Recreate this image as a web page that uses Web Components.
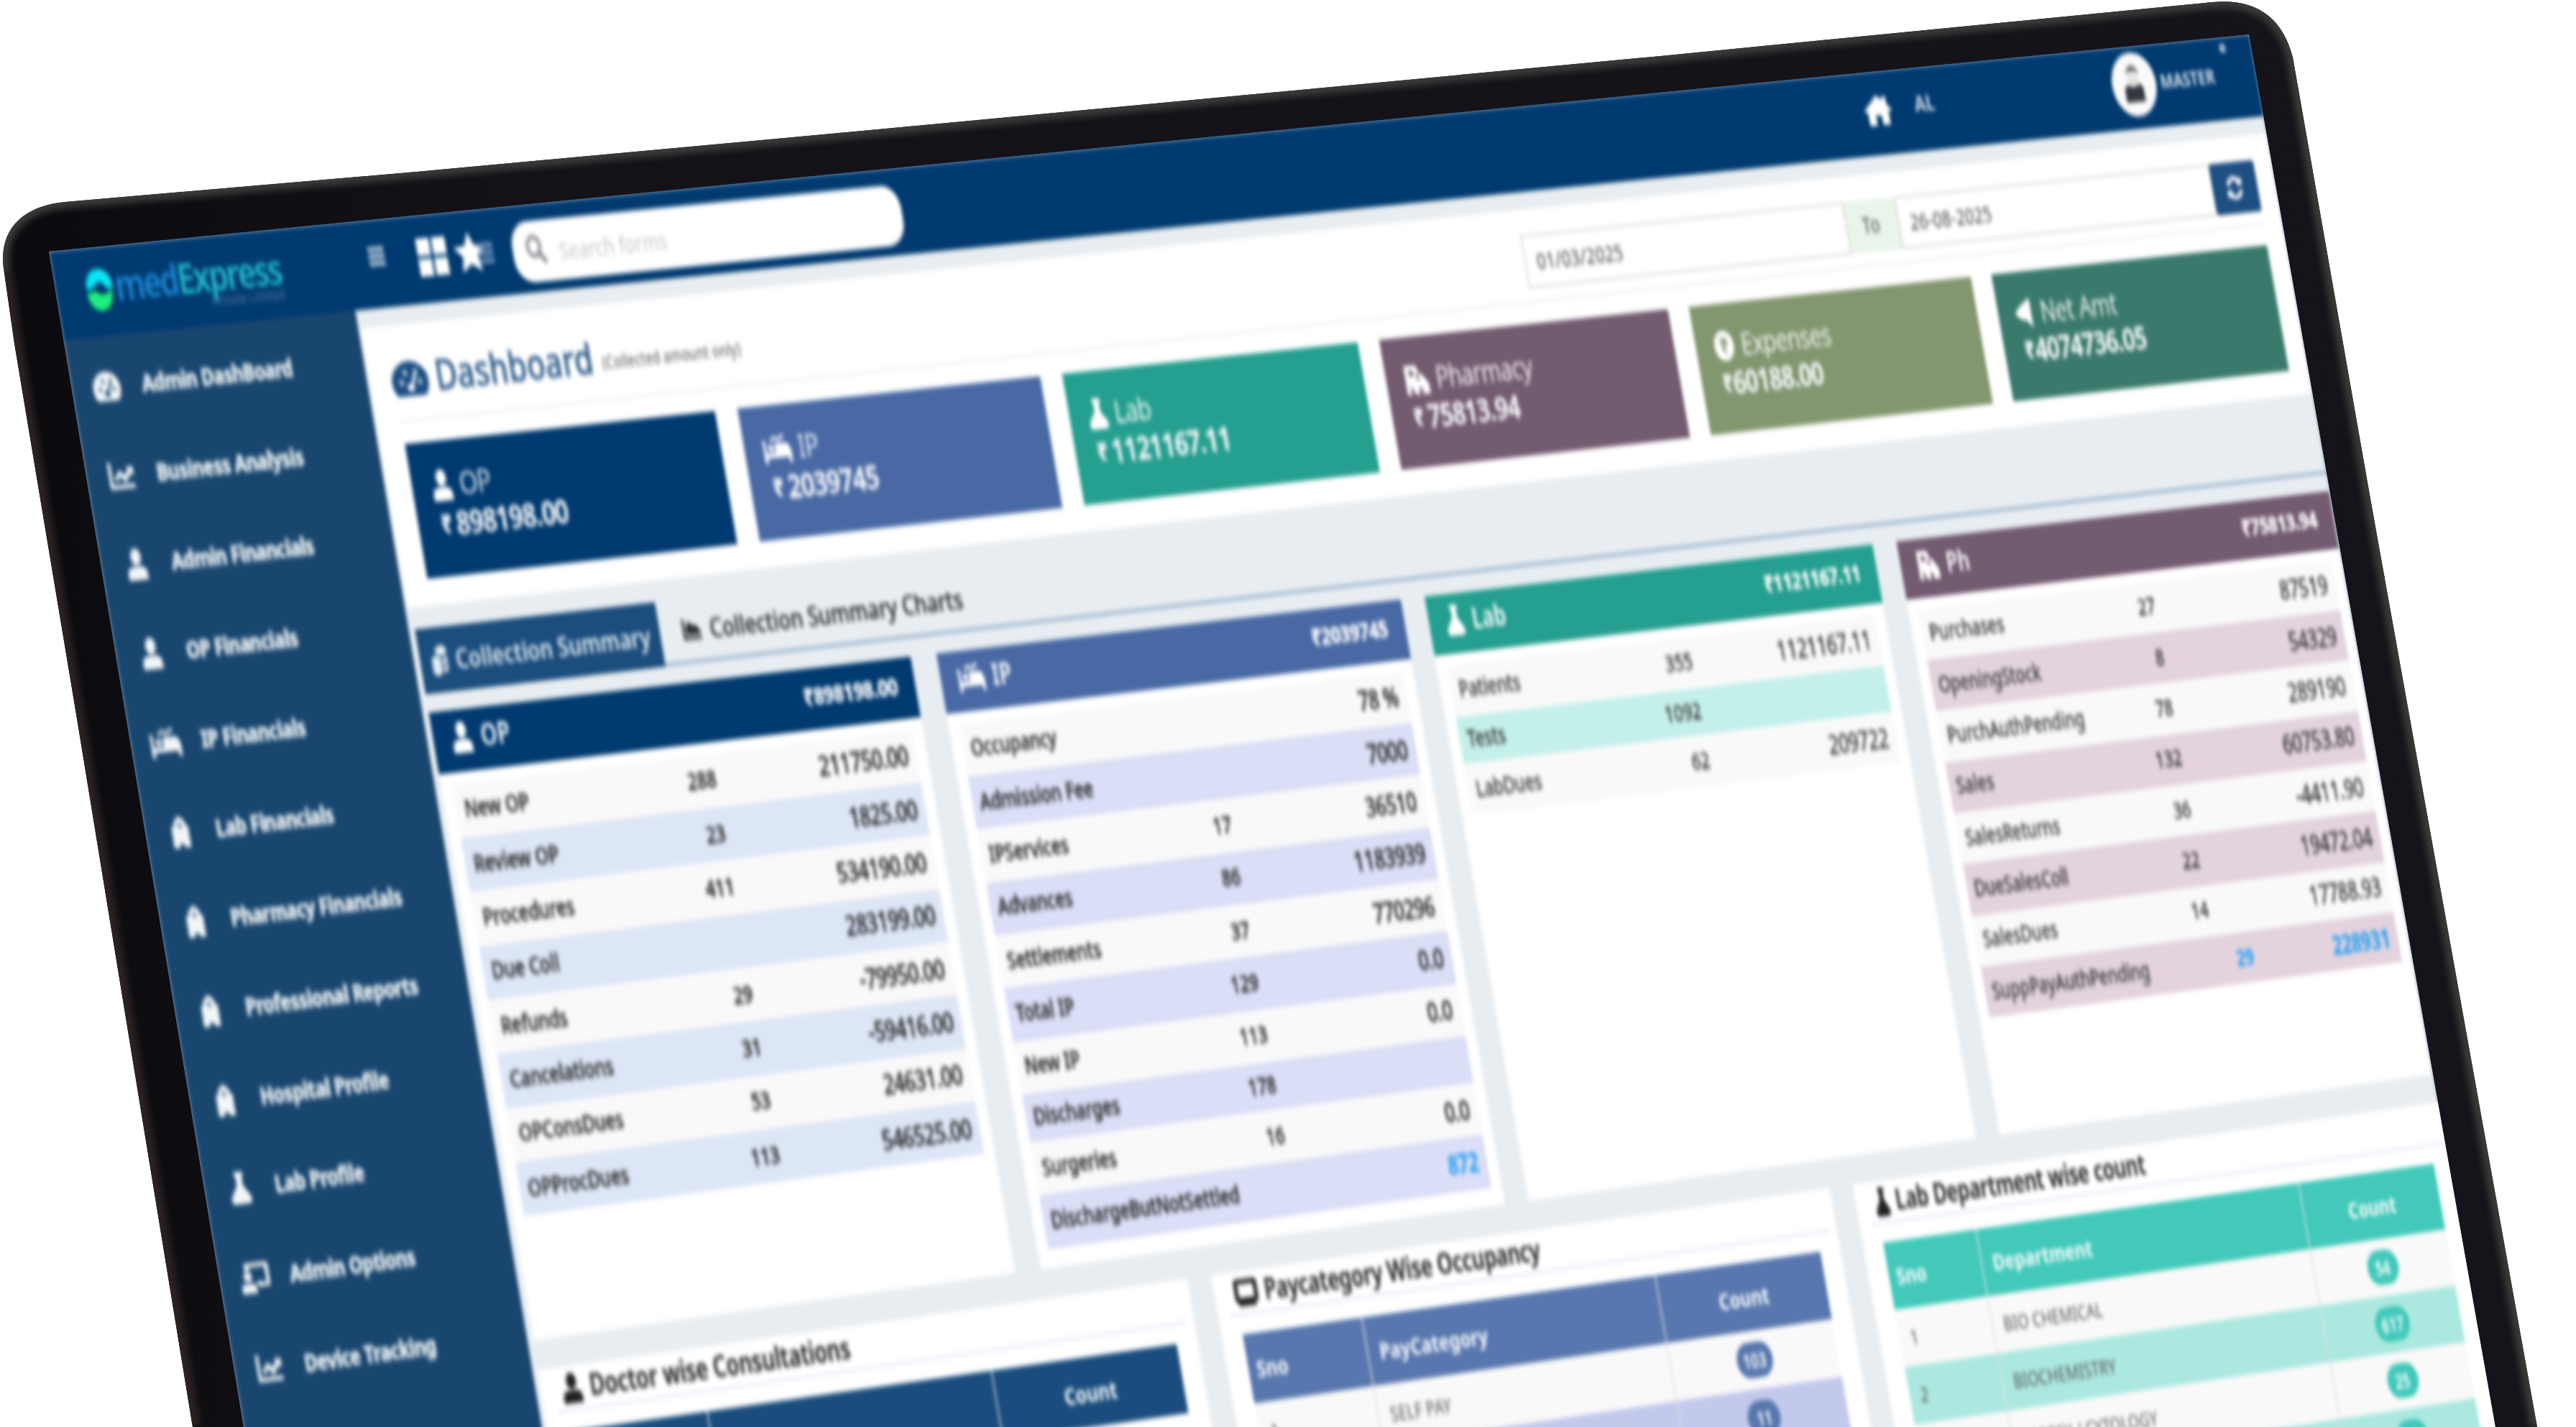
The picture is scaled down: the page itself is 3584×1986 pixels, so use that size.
<!DOCTYPE html>
<html lang="en">
<head>
<meta charset="utf-8">
<title>medExpress Dashboard</title>
<style>
html,body{margin:0;padding:0;background:#fff}
body{width:3584px;height:1986px;overflow:hidden;font-family:"Noto Sans","Open Sans",sans-serif}
</style>
</head>
<body>
<laptop-mockup>
  <app-screen>
    <top-bar slot="top"></top-bar>
    <side-nav slot="side">
      <nav-item icon="gauge" w="22">Admin DashBoard</nav-item>
      <nav-item icon="line" w="20">Business Analysis</nav-item>
      <nav-item icon="person" w="17">Admin Financials</nav-item>
      <nav-item icon="person" w="17">OP Financials</nav-item>
      <nav-item icon="bed" w="24">IP Financials</nav-item>
      <nav-item icon="hospital" w="18">Lab Financials</nav-item>
      <nav-item icon="hospital" w="18">Pharmacy Financials</nav-item>
      <nav-item icon="hospital" w="18">Professional Reports</nav-item>
      <nav-item icon="hospital" w="18">Hospital Profile</nav-item>
      <nav-item icon="flask" w="17">Lab Profile</nav-item>
      <nav-item icon="board" w="23">Admin Options</nav-item>
      <nav-item icon="line" w="20">Device Tracking</nav-item>
    </side-nav>
    <overview-panel>
      <stat-card icon="person" w="17" color="#003a70" amount="898198.00">OP</stat-card>
      <stat-card icon="bed" w="23" color="#4869a4" amount="2039745">IP</stat-card>
      <stat-card icon="flask" w="17" color="#259f8f" amount="1121167.11">Lab</stat-card>
      <stat-card icon="rx" w="22" color="#735b70" amount="75813.94">Pharmacy</stat-card>
      <stat-card icon="coin" w="19" color="#82966f" amount="60188.00" tight>Expenses</stat-card>
      <stat-card icon="horn" w="17" color="#3a7a6c" amount="4074736.05" tight>Net Amt</stat-card>
    </overview-panel>
    <tab-strip></tab-strip>
    <summary-grid></summary-grid>
    <count-grid></count-grid>
  </app-screen>
</laptop-mockup>

<script>
const ICONS = {
  gauge:'<path fill-rule="evenodd" d="M12 1C5.400 1 0 6.900 0 14c0 2.900.8 5.700 2.200 8 .4.700 1 1 1.800 1h16c.8 0 1.400-.3 1.800-1 1.400-2.300 2.200-5.100 2.200-8C24 6.900 18.600 1 12 1zM5 13h2.500v2.500H5zM8 7h2.500v2.500H8zM17 13h2.500v2.500H17zM16 6l1.500 1-3.600 9.500c.9 1.600.2 3.500-1.900 3.500-2 0-3-1.900-2-3.500.6-.9 1.500-1.200 2.500-1.100z"/>',
  line:'<path d="M0 2h3v17h21v3H0z"/><path d="M5 14l6-6 4 4 4-4-2-2h7v7l-2-2-7 7-4-5-4 4z"/>',
  person:'<ellipse cx="12" cy="6.500" rx="5.800" ry="6.500"/><path d="M8 14h8c5 0 7 2.500 7 6v4H1v-4c0-3.500 2-6 7-6z"/>',
  bed:'<path d="M0 5h2.200v10H24v8h-2.600v-4H2.600v4H0z"/><circle cx="6.500" cy="11.500" r="2.600"/><path d="M10 8h9c3 0 5 3 5 8H10zM6 5l5-3 2 2 5-3 1 2-6 3.500-2-2-4 2.500z"/>',
  hospital:'<path fill-rule="evenodd" d="M6 4l6-4 6 4v3.500h3V24h-6.500v-3h-5v3H3V7.500h3zM11.300 5v1.500H10V8h1.300v1.500h1.400V8H14V6.500h-1.300V5z"/>',
  flask:'<path d="M7 0h10v3h-1.500v7l7 8c1.800 3 .5 6-2.500 6H4c-3 0-4.300-3-2.500-6l7-8V3H7z"/>',
  board:'<path fill-rule="evenodd" d="M5 1h17c1.200 0 2 .8 2 2v14c0 1.200-.8 2-2 2h-8v-3h7V4H8v3H4V3c0-1.200.0-2 1-2z"/><circle cx="6" cy="11" r="3.500"/><path d="M3 16h6c2 0 3.500 1.500 3.500 4v3.500H0V20c0-2.500 1-4 3-4z"/><path d="M13 15h5v2.500h-5z"/>',
  rx:'<path fill-rule="evenodd" d="M1 1h8c3.500 0 5 2 5 4.500S12.500 9 11 10l3 4V8h3l6 8v8h-7v-5h-3v5H9l-4-8v8H1zM5 5v4h3c2.500 0 2.500-4 0-4z"/>',
  coin:'<path fill-rule="evenodd" d="M12 0C5.400 0 1 5.400 1 12s4.400 12 11 12 11-5.400 11-12S18.600 0 12 0zM8 6h8v2h-2c.3.300.5.900.6 1.500H16v2h-1.500c-.4 1.500-1.500 2.300-2.800 2.500l3.300 4h-2.700L9 13.500v-1.700c1.800 0 2.900.1 3.200-1.300H8V8.500h4C11.700 7.900 11 8 8 8z"/>',
  horn:'<path d="M20 0v24l-7-6-4-1-2 0L0 13v-2l7-5z"/>',
  refresh:'<path d="M2 10C3 4.500 7 1.500 12 1.500c3 0 5.500 1 7.500 3L22 2v8h-8l2.600-2.600C15.300 6 13.700 5.300 12 5.300c-2.900 0-5.200 1.800-6 4.700zM22 14c-1 5.500-5 8.500-10 8.500-3 0-5.500-1-7.500-3L2 22v-8h8l-2.600 2.600c1.300 1.400 2.900 2.100 4.600 2.100 2.900 0 5.200-1.800 6-4.700z"/>',
  home:'<path d="M12 1l4.500 4V2.500H20v5.700l4 3.800-1.500 1.800L21 12.600V23h-6.500v-7h-5v7H3V12.600l-1.500 1.200L0 12z"/>',
  star:'<path d="M12 0l3.600 8 8.400.9-6.300 5.800L19.500 24 12 19.300 4.500 24l1.800-9.300L0 8.900 8.400 8z"/>',
  windows:'<path d="M0 0h11v11H0zM13 0h11v11H13zM0 13h11v11H0zM13 13h11v11H13z"/>',
  list:'<path d="M0 2h24v5H0zM0 9.500h24v5H0zM0 17h24v5H0z"/>',
  search:'<circle cx="10" cy="10" r="7.600" fill="none" stroke="currentColor" stroke-width="3.400"/><path d="M15.500 15.500L23 23" stroke="currentColor" stroke-width="4" stroke-linecap="round"/>',
  screen:'<path fill-rule="evenodd" d="M3 1h18c1.600 0 3 1.200 3 3v13c0 1.600-1.200 3-3 3v3H3v-3c-1.600 0-3-1.200-3-3V4c0-1.600 1.200-3 3-3zM4 5v11h16V5z"/>',
  coins:'<path d="M7 4c1-2.500 5-4 9-4s7 1.500 7 4-3 4.500-7 4.500S6 6.500 7 4zM23 8v4c0 2-3 4-7 4V10.500c3 0 5.500-1 7-2.500zM23 14.500V18c0 2-3 4-7 4v-4.500c3 0 5.500-1 7-3z"/><path d="M7.500 8C3.500 8 1 9.500 1 12v8c0 2.500 3 4 6.500 4S14 22.500 14 20v-8c0-2.500-3-4-6.500-4z"/>',
  area:'<path d="M0 2h3v17h21v3H0z"/><path d="M4.500 17V9l5-5 4 5 3-2 6.500 6v4z"/>'
};

/* Defines an element whose open shadow root is filled from render(host). */
function define(tag, css, render) {
  customElements.define(tag, class extends HTMLElement {
    constructor() {
      super();
      this.attachShadow({mode: 'open'});
    }
    connectedCallback() {
      this.shadowRoot.innerHTML = `<style>:host,*{box-sizing:border-box}${css}</style>${render(this)}`;
    }
  });
}
const icon = (name, w, h, extra = '') => `<ui-icon name="${name}" style="width:${w}px;height:${h}px;${extra}"></ui-icon>`;

define('ui-icon', `:host{display:block;flex:none}svg{display:block;width:100%;height:100%}`,
  h => `<svg viewBox="0 0 24 24" preserveAspectRatio="none" fill="currentColor">${ICONS[h.getAttribute('name')]}</svg>`);

/* Laptop body; the display is slotted over the bezel. */
define('laptop-mockup', `
  :host{display:block;position:relative;width:3584px;height:1986px;overflow:hidden}
  svg{display:block}
`, () => `
  <svg width="3584" height="1986" viewBox="0 0 3584 1986">
    <defs>
      <linearGradient id="b" x1="0" y1="0" x2="1" y2="0"><stop offset="0" stop-color="#0b0a0e"/><stop offset=".2" stop-color="#141218"/><stop offset="1" stop-color="#15141a"/></linearGradient>
      <filter id="s" x="-5%" y="-5%" width="110%" height="110%"><feGaussianBlur stdDeviation="5"/></filter>
      <clipPath id="c"><path id="o" d="M268 1986L107 1000L20 478L6 380C-4 325 26 287 91 281L580 239L1200 182L2300 79L3078 3C3138 -3 3176 24 3190 80L3299 700L3530 1986Z"/></clipPath>
    </defs>
    <g clip-path="url(#c)">
      <rect width="3584" height="1986" fill="url(#b)"/>
      <path d="M268 1986L107 1000L20 478L6 380" fill="none" stroke="#2a2022" stroke-width="22" filter="url(#s)"/>
      <path d="M6 380C-4 325 26 287 91 281L580 239L1200 182L2300 79L3078 3C3138 -3 3176 24 3190 80L3299 700L3530 1986" fill="none" stroke="#3b3a38" stroke-width="18" filter="url(#s)"/>
    </g>
  </svg>
  <slot></slot>`);

/* 1920-unit wide page projected onto the tilted display. */
define('app-screen', `
  :host{display:block;position:absolute;left:0;top:0;width:1920px;height:912px;overflow:hidden;background:#8397a9;
    transform-origin:0 0;
    transform:matrix3d(1.733438,-.155156,0,.0000444844,.386119,2.331493,0,-.0000084328,0,0,1,0,68,350,0,1)}
  .page{display:flex;flex-direction:column;width:1920px;height:912px;filter:blur(1.85px);background:#e8edf1}
  .body{display:flex;flex:1;min-height:0}
  main{display:flex;flex-direction:column;flex:none;width:1683px;background:#e8edf1;padding-top:10.500px}
`, () => `<div class="page"><slot name="top"></slot><div class="body"><slot name="side"></slot><main><slot></slot></main></div></div>`);

define('top-bar', `
  :host{display:flex;align-items:center;height:53px;flex:none;background:#003a70;color:#fff;padding-left:24px}
  .brand{display:flex;align-items:center;width:231px;height:50px;margin-top:-3px}
  .mark{width:23px;height:27px}
  .word{display:flex;flex-direction:column;align-items:flex-end;margin-left:1px;margin-top:2px}
  .name{font-size:25px;line-height:25px;font-weight:600;color:#22b8cb;letter-spacing:-1.300px}
  .name i{font-style:normal;color:#1b86d2}
  .sub{font-size:8px;line-height:6px;color:#3d6791;font-weight:600}
  .search{display:flex;align-items:center;width:328px;height:37px;margin:4px 0 0 16px;border-radius:15px;background:#fff;padding-left:11px;color:#c6c9ce;font-size:14.500px}
  .search span{margin-left:11px}
  .right{display:flex;align-items:center;margin-left:auto;padding-right:36px;height:50px}
  .al{font-size:15px;font-weight:700;color:#ccd8e6;margin:-10px 0 0 21px}
  .ava{width:41px;height:41px;margin:-4px 0 0 165px}
  .user{font-size:13px;font-weight:700;color:#d0deeb;margin:-6px 0 0 4px;width:54px;letter-spacing:-.1px}
  .caret{width:6px;height:6px;border-radius:50%;background:#9db6d1;margin:-39px -12px 0 6px}
`, () => `
  <div class="brand">
    <svg class="mark" viewBox="0 0 24 28"><path d="M1 13C1 5 6 1 12 1s11 4 11 12c-4 2-6 0-8-3-3-2-6 0-8 2-2 1-4 2-6 1z" fill="#08e6f2"/><path d="M1 15c3 1 5 0 7-1 3 4 9 4 14 0 0 8-4 13-10 13S1 23 1 15z" fill="#1df07c"/></svg>
    <div class="word"><div class="name"><i>med</i>Express</div><div class="sub">Private Limited</div></div>
  </div>
  ${icon('list', 13, 14, 'color:#b6c6da;margin-top:-10px')}
  ${icon('windows', 24, 23, 'margin:-2px 0 0 27px')}
  ${icon('star', 26, 24, 'margin:-3px 0 0 6px')}
  ${icon('list', 12, 15, 'color:#6d90b8;margin:-1px 0 0 -6px')}
  <div class="search">${icon('search', 16, 18, 'color:#85888d;margin-top:-3px')}<span>Search forms</span></div>
  <div class="right">
    ${icon('home', 25, 21, 'margin-top:-4px')}
    <div class="al">AL</div>
    <svg class="ava" viewBox="0 0 40 40"><circle cx="20" cy="20" r="20" fill="#fafafa"/><path d="M14 14c0-8 11-8 11 0l-2-2h-7z" fill="#6b6d71"/><path d="M15 14h9v5c0 4-9 4-9 0z" fill="#e6e2df"/><path d="M11 24c0-3 3-4 4-4 2 2 7 2 9 0 2 0 4 1 4 4v7H11z" fill="#34383f"/></svg>
    <div class="user">MASTER</div><div class="caret"></div>
  </div>`);

define('side-nav', `:host{display:flex;flex-direction:column;flex:none;width:237px;background:#19466f;padding-top:3.500px}`, () => `<slot></slot>`);
define('nav-item', `
  :host{display:flex;align-items:center;flex:none;height:52.900px;padding-left:16px;color:#f2f6f8}
  .i{width:24px;margin-right:16.500px;display:flex;justify-content:center}
  span{font-size:14px;font-weight:700;white-space:nowrap;letter-spacing:-.2px;-webkit-text-stroke:.4px #f2f6f8}
`, h => `<div class="i">${icon(h.getAttribute('icon'), h.getAttribute('w'), 19)}</div><span><slot></slot></span>`);

define('overview-panel', `
  :host{display:flex;flex-direction:column;flex:none;height:168px;margin-left:2px;background:#fff;padding:0 17.500px 0 19.500px}
  header{display:flex;align-items:center;height:58.500px;border-bottom:1px solid #ececec;padding-top:8px;flex:none}
  h1{margin:0 0 0 6px;font-size:24.500px;font-weight:400;color:#2a5a88;line-height:30px;-webkit-text-stroke:.6px #2a5a88;letter-spacing:.45px}
  small{font-size:10px;color:#6c6c6c;margin:5px 0 0 7px;font-weight:500;letter-spacing:.1px}
  .cards{display:flex;gap:19px;padding-top:12.500px}
  .dates{display:flex;margin-left:auto;width:674px;height:33px;font-size:14.500px;color:#666;font-weight:500}
  .f{display:flex;align-items:center;border:1px solid #d0d0d0;padding:0 0 1px 10px}
  .to{display:flex;align-items:center;justify-content:center;width:47px;background:#e9f5ea;padding:0 2px 2px 0}
  .go{display:flex;align-items:center;justify-content:center;width:42px;background:#1e4f82;color:#fff;border-radius:2px}
`, () => `
  <header>${icon('gauge', 30, 23, 'color:#1d5083;margin-left:-1.500px')}<h1>Dashboard</h1><small>(Collected amount only)</small>
    <div class="dates"><div class="f" style="width:292px">01/03/2025</div><div class="to">To</div><div class="f" style="width:293px">26-08-2025</div><div class="go">${icon('refresh', 17, 17)}</div></div>
  </header>
  <div class="cards"><slot></slot></div>`);

define('stat-card', `
  :host{display:flex;flex-direction:column;flex:none;width:258px;height:81.500px;padding:14.500px 0 0 16.500px;color:#fff}
  .n{display:flex;align-items:center;height:24px;font-size:19px;font-weight:300;line-height:24px;-webkit-text-stroke:.3px #fff}
  .a{display:flex;align-items:center;height:23px;font-size:20px;font-weight:600;line-height:23px;letter-spacing:-.5px;color:#f6f8fa;-webkit-text-stroke:.3px #f6f8fa}
  .r{font-size:15px;font-weight:800;width:14px;text-align:center;margin-right:1px}
  .n span{margin-left:6px}
  :host([tight]) .r{margin-right:-2px}
`, h => {
  h.style.background = h.getAttribute('color');
  return `<div class="n">${icon(h.getAttribute('icon'), h.getAttribute('w'), 19)}<span><slot></slot></span></div><div class="a"><span class="r">₹</span>${h.getAttribute('amount')}</div>`;
});

define('tab-strip', `
  :host{display:flex;flex:none;height:39px;margin:13.500px 0 10.500px 4.500px;border-bottom:2px solid #9ab5ce;font-size:16.500px}
  .t{display:flex;align-items:center;height:39px;white-space:nowrap}
  .on{width:199px;background:#1b4d7d;color:#e4ecf3;padding-left:9px;font-weight:600}
  .off{color:#2c2c2c;font-weight:500;padding-left:19px;margin-top:-1px;-webkit-text-stroke:.2px}
`, () => `
  <div class="t on">${icon('coins', 14, 18, 'margin-right:6.500px')}<span>Collection Summary</span></div>
  <div class="t off">${icon('area', 15, 15, 'margin-right:8px')}<span>Collection Summary Charts</span></div>`);

/* Each row: label, count, amount, [extra class] */
const SUMMARY = [
  {t:'OP', i:'person', w:17, c:'#003a70', s:'#dde6f6', sum:'898198.00', rows:[['New OP','288','211750.00'],['Review OP','23','1825.00'],['Procedures','411','534190.00'],['Due Coll','','283199.00'],['Refunds','29','-79950.00'],['Cancelations','31','-59416.00'],['OPConsDues','53','24631.00'],['OPProcDues','113','546525.00']]},
  {t:'IP', i:'bed', w:22, c:'#4869a4', s:'#dadef6', sum:'2039745', rows:[['Occupancy','','78 %'],['Admission Fee','','7000'],['IPServices','17','36510'],['Advances','86','1183939'],['Settlements','37','770296'],['Total IP','129','0.0'],['New IP','113','0.0'],['Discharges','178',''],['Surgeries','16','0.0'],['DischargeButNotSettled','','872','link']]},
  {t:'Lab', i:'flask', w:16, c:'#259f8f', s:'#c4f0ea', sum:'1121167.11', light:1, rows:[['Patients','355','1121167.11'],['Tests','1092',''],['LabDues','62','209722']]},
  {t:'Ph', i:'rx', w:20, c:'#735b70', s:'#e2d3de', sum:'75813.94', light:1, rows:[['Purchases','27','87519'],['OpeningStock','8','54329'],['PurchAuthPending','78','289190'],['Sales','132','60753.80'],['SalesReturns','36','-4411.90'],['DueSalesColl','22','19472.04'],['SalesDues','14','17788.93'],['SuppPayAuthPending','29','228931','link wide']]}
];
define('summary-grid', `:host{display:flex;flex:none;gap:21.500px;height:375.500px;padding-left:5px;margin-bottom:18px}`,
  () => SUMMARY.map((_, i) => `<summary-panel n="${i}"></summary-panel>`).join(''));
define('summary-panel', `
  :host{display:flex;flex-direction:column;flex:none;width:403px;background:#fff}
  header{display:flex;align-items:center;height:37px;flex:none;color:#fff;padding:0 15px 4px 15px;font-size:17px;font-weight:600}
  header span{margin-left:7px}
  header b{margin-left:auto;font-size:15px;font-weight:700;letter-spacing:-.2px;-webkit-text-stroke:.3px}
  .rows{display:flex;flex-direction:column;padding:7px 9px 0 9px}
  .r{display:flex;align-items:center;height:32.350px;background:#f9f9f9;padding:0 7px;font-size:14px;font-weight:500;color:#2a2a2a;white-space:nowrap;-webkit-text-stroke:.35px}
  .r.low{height:29px}
  .r:nth-child(even){background:var(--stripe)}
  .c{width:209px;display:flex;justify-content:space-between;padding-bottom:2px}
  .wide .c{width:243px}
  .a{margin-left:auto;font-size:16px;letter-spacing:-.2px;padding-bottom:1px}
  .light .r{font-weight:400;color:#3a3a3a;letter-spacing:.15px}
  .light .a{font-weight:400;letter-spacing:-.1px}
  .r.link .n,.r.link .a{color:#3aa5f0;font-weight:700}
`, h => {
  const p = SUMMARY[h.getAttribute('n')];
  h.style.setProperty('--stripe', p.s);
  return `<header style="background:${p.c}">${icon(p.i, p.w, 19)}<span>${p.t}</span><b>₹${p.sum}</b></header>
  <div class="rows ${p.light ? 'light' : ''}">${p.rows.map(r => `<div class="r ${r[2] ? '' : 'low'} ${r[3] || ''}"><div class="c"><span>${r[0]}</span>${r[1] ? `<span class="n">${r[1]}</span>` : ''}</div><div class="a">${r[2]}</div></div>`).join('')}</div>`;
});

const COUNTS = [
  {t:'Doctor wise Consultations', i:'person', w:17, c:'#1a4d7e', s:'#c9d8ec', cols:[114,239,158], h:['Sno','Doctor','Count'], rows:[]},
  {t:'Paycategory Wise Occupancy', i:'screen', w:20, c:'#5877ae', s:'#c2c9ec', cols:[104,259,148], h:['Sno','PayCategory','Count'], rows:[['1','SELF PAY','103'],['2','','11']]},
  {t:'Lab Department wise count', i:'flask', w:13, c:'#42c9ba', s:'#abe8df', cols:[85,299,127], h:['Sno','Department','Count'], rows:[['1','BIO CHEMICAL','54'],['2','BIOCHEMISTRY','617'],['3','BIOPSY / CYTOLOGY','25'],['4','','12']]}
];
define('count-grid', `:host{display:flex;flex:none;gap:20.800px;height:240px;padding-left:4px}`,
  () => COUNTS.map((_, i) => `<count-panel n="${i}"></count-panel>`).join(''));
define('count-panel', `
  :host{display:flex;flex-direction:column;flex:none;width:547px;background:#fff}
  h2{display:flex;align-items:center;height:27px;margin:0 6px 0 11px;padding-left:6px;border-bottom:2px solid #eceefa;font-size:17px;font-weight:600;color:#222;letter-spacing:0;-webkit-text-stroke:.2px;flex:none}
  .tb{margin:11px 18px 0 18px}
  .r{display:flex;height:36px;background:#f9f9f9;font-size:13px;color:#555}
  .r:nth-child(odd){background:var(--stripe)}
  .r.hd{height:42px;background:var(--head);color:#f8fbfd;font-weight:700;font-size:15px}
  .r>div{flex:none;display:flex;align-items:center;padding-left:10px;border-right:1px solid #dcdfe2}
  .r>div:last-child{justify-content:center;padding:0;border:0}
  .hd>div:first-child{padding-left:7px}
  .p{display:flex;align-items:center;justify-content:center;height:22px;min-width:29px;padding:0 6px;border-radius:11px;background:var(--head);color:#fff;font-weight:600;font-size:12px}
`, h => {
  const p = COUNTS[h.getAttribute('n')];
  h.style.setProperty('--stripe', p.s);
  h.style.setProperty('--head', p.c);
  const cells = (r, pill) => r.map((x, i) => `<div style="width:${p.cols[i]}px">${pill && i == 2 ? `<span class="p">${x}</span>` : x}</div>`).join('');
  return `<h2>${icon(p.i, p.w, 18, 'margin-right:6px')}${p.t}</h2>
  <div class="tb"><div class="r hd">${cells(p.h)}</div>${p.rows.map(r => `<div class="r">${cells(r, 1)}</div>`).join('')}</div>`;
});
</script>
</body>
</html>
